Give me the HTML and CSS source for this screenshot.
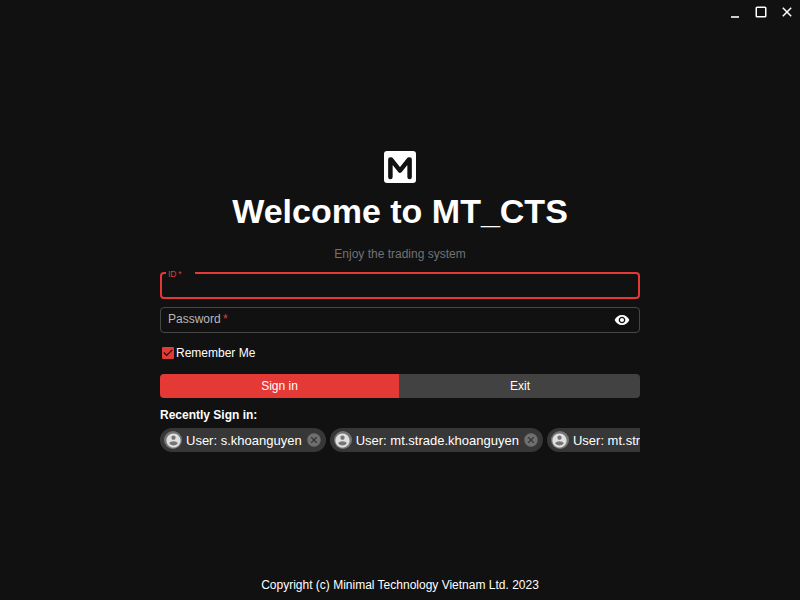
FILE: index.html
```html
<!DOCTYPE html>
<html lang="en">
<head>
<meta charset="utf-8">
<title>MT_CTS</title>
<link rel="stylesheet" href="styles.css">
</head>
<body>
<header class="titlebar">
  <svg class="win" viewBox="0 0 16 16"><path d="M4 13h8" stroke-width="1.6"/></svg>
  <svg class="win" viewBox="0 0 16 16"><rect x="3.25" y="3.25" width="9.5" height="9.5" rx=".8" stroke-width="1.5"/></svg>
  <svg class="win" viewBox="0 0 16 16"><path d="M3.8 3.8l8.4 8.4M12.2 3.8l-8.4 8.4" stroke-width="1.5"/></svg>
</header>
<main class="login">
  <svg class="logo" viewBox="0 0 32 32"><rect width="32" height="32" rx="3" fill="#fff"/><path d="M6.400 26V8.400h.6L16 19.600l9-11.200h.6V26" fill="none" stroke="#111" stroke-width="4.500" stroke-linecap="round" stroke-linejoin="round"/></svg>
  <h1 class="title">Welcome to MT_CTS</h1>
  <p class="subtitle">Enjoy the trading system</p>
  <fieldset class="field focused"><legend><span class="id">ID<span class="star"> *</span></span></legend></fieldset>
  <div class="field password">
    <span class="label">Password<span class="star"> *</span></span>
    <svg class="eye" viewBox="0 0 24 24"><path d="M12 4.5C7 4.5 2.73 7.61 1 12c1.73 4.39 6 7.5 11 7.5s9.27-3.11 11-7.5c-1.73-4.39-6-7.5-11-7.5zM12 17c-2.76 0-5-2.24-5-5s2.24-5 5-5 5 2.24 5 5-2.24 5-5 5zm0-8c-1.66 0-3 1.34-3 3s1.34 3 3 3 3-1.34 3-3-1.34-3-3-3z"/></svg>
  </div>
  <div class="remember">
    <svg class="check" viewBox="0 0 24 24"><path d="M19 3H5c-1.11 0-2 .9-2 2v14c0 1.1.89 2 2 2h14c1.11 0 2-.9 2-2V5c0-1.1-.89-2-2-2zm-9 14l-5-5 1.41-1.41L10 14.17l7.59-7.59L19 8l-9 9z"/></svg>
    <span>Remember Me</span>
  </div>
  <div class="buttons"><button class="signin">Sign in</button><button class="exit">Exit</button></div>
  <h2 class="recent">Recently Sign in:</h2>
  <div class="chips">
    <div class="chip"><span class="avatar"><svg viewBox="0 0 24 24"><use href="#person"/></svg></span><span class="name">User: s.khoanguyen</span><svg class="delete" viewBox="0 0 24 24"><use href="#cancel"/></svg></div>
    <div class="chip"><span class="avatar"><svg viewBox="0 0 24 24"><use href="#person"/></svg></span><span class="name">User: mt.strade.khoanguyen</span><svg class="delete" viewBox="0 0 24 24"><use href="#cancel"/></svg></div>
    <div class="chip cut"><span class="avatar"><svg viewBox="0 0 24 24"><use href="#person"/></svg></span><span class="name">User: mt.str</span></div>
  </div>
</main>
<footer class="copyright">Copyright (c) Minimal Technology Vietnam Ltd. 2023</footer>
<svg class="defs"><defs>
  <path id="person" d="M12 2C6.48 2 2 6.48 2 12s4.48 10 10 10 10-4.48 10-10S17.52 2 12 2zm0 3c1.66 0 3 1.34 3 3s-1.34 3-3 3-3-1.34-3-3 1.34-3 3-3zm0 14.2c-2.5 0-4.71-1.28-6-3.22.03-1.99 4-3.08 6-3.08 1.99 0 5.97 1.09 6 3.08-1.29 1.94-3.5 3.22-6 3.22z"/>
  <path id="cancel" d="M12 2C6.47 2 2 6.47 2 12s4.47 10 10 10 10-4.47 10-10S17.53 2 12 2zm5 13.59L15.59 17 12 13.41 8.41 17 7 15.59 10.59 12 7 8.41 8.41 7 12 10.59 15.59 7 17 8.41 13.41 12 17 15.59z"/>
</defs></svg>
</body>
</html>
```
FILE: styles.css
```css
* { box-sizing: border-box; }
body {
  margin: 0;
  height: 600px;
  display: flex;
  flex-direction: column;
  align-items: center;
  overflow: hidden;
  background: #111;
  color: #fff;
  font: 12px/18px "Liberation Sans", Arial, sans-serif;
}
svg { display: block; flex: none; }
.titlebar {
  align-self: stretch;
  height: 24px;
  padding: 4px 5px 0 0;
  display: flex;
  justify-content: flex-end;
  gap: 10px;
}
.win { width: 16px; height: 16px; fill: none; stroke: #fff; }
.login {
  width: 480px;
  padding-top: 127px;
  flex: 1;
  display: flex;
  flex-direction: column;
}
.logo { width: 32px; height: 32px; align-self: center; }
.title { margin: 7px 0 0; font-size: 34px; line-height: 42px; text-align: center; }
.subtitle { margin: 13px 0 0; color: #727272; text-align: center; }
.field { margin: 0; border-radius: 4px; }
.focused {
  height: 32px;
  margin-top: 4px;
  padding: 0 4px;
  border: 2px solid #e53935;
  color: #e53935;
}
.focused legend { width: 29px; padding: 0 2px; font-size: 8.5px; line-height: 12px; white-space: nowrap; }
.id { display: block; padding-top: 1px; margin-bottom: -1px; }
.password {
  height: 26px;
  margin-top: 8px;
  padding: 0 9px 0 7px;
  border: 1px solid #464646;
  display: flex;
  align-items: center;
  justify-content: space-between;
}
.label { color: #b8b8b8; line-height: 22px; margin-bottom: 2px; }
.star { color: #e53935; margin-left: -1px; }
.id .star { margin-left: -.5px; }
.eye { width: 16px; height: 16px; fill: #fff; }
.remember { display: flex; align-items: center; height: 18px; margin-top: 11px; }
.check { width: 16px; height: 16px; fill: #e53935; }
.buttons { display: flex; height: 24px; margin-top: 12px; border-radius: 4px; overflow: hidden; }
.buttons button { border: 0; padding: 0; color: #fff; font: inherit; }
.signin { width: 240px; background: #e53935; }
.buttons .signin { border-right: 1px solid #7a2e2c; }
.exit { flex: 1; background: #424242; }
.recent { margin: 8px 0 0; font-size: 12px; line-height: 18px; }
.chips { display: flex; gap: 4px; margin-top: 4px; overflow: hidden; }
.chip { flex: none; display: flex; align-items: center; height: 24px; padding: 0 4px; border-radius: 12px; background: #373737; font-size: 13px; white-space: nowrap; }
.cut { padding-right: 0; border-radius: 12px 0 0 12px; }
.name { padding-top: 2px; }
.avatar { flex: none; width: 18px; height: 18px; margin-right: 4px; border-radius: 50%; background: #757575; display: flex; align-items: center; justify-content: center; }
.avatar svg { width: 17px; height: 17px; fill: #e0e0e0; }
.delete { width: 16px; height: 16px; margin-left: 4px; fill: #6f6f6f; }
.copyright { height: 24px; line-height: 18px; }
.defs { position: absolute; width: 0; height: 0; }
```
